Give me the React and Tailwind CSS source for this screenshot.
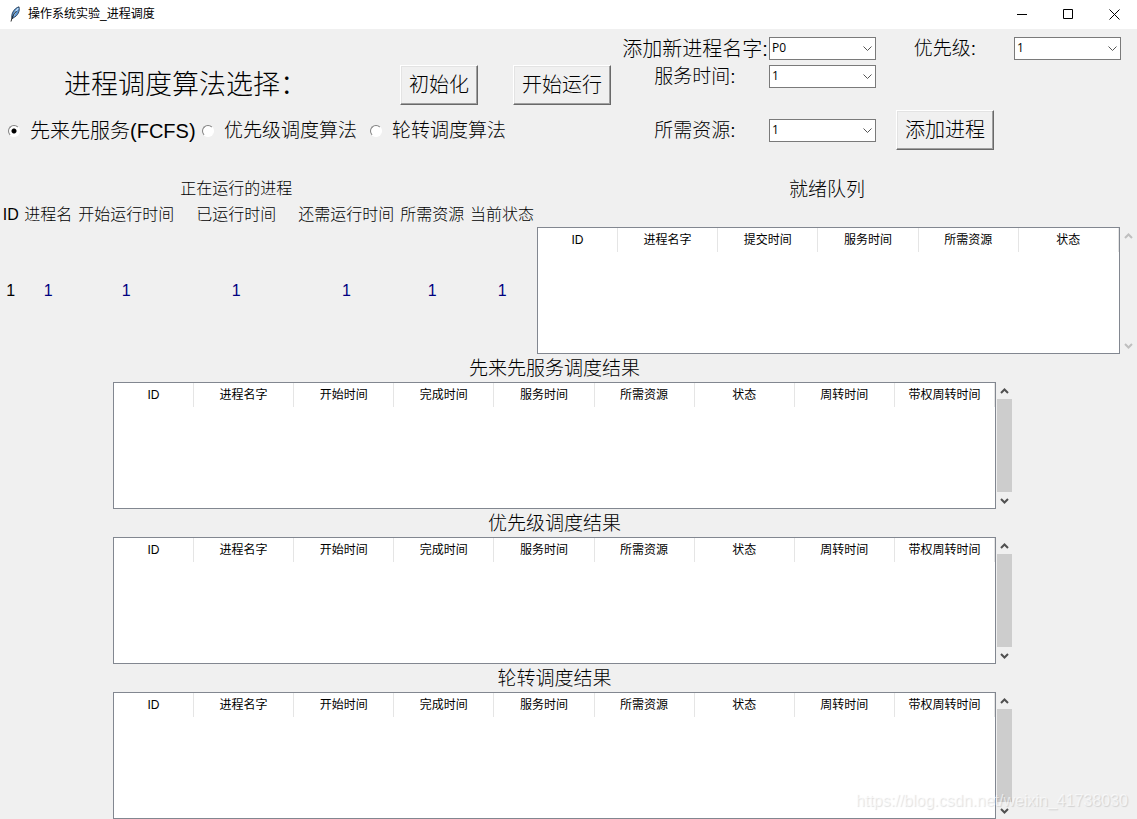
import { useState } from 'react';

const QUEUE_COLUMNS = ['ID', '进程名字', '提交时间', '服务时间', '所需资源', '状态'];

const RESULT_COLUMNS = [
  'ID', '进程名字', '开始时间', '完成时间', '服务时间',
  '所需资源', '状态', '周转时间', '带权周转时间',
];

const RESULTS = ['先来先服务调度结果', '优先级调度结果', '轮转调度结果'];

const RUNNING = [
  { label: 'ID',           value: '1', width: 'w-[4%]' },
  { label: '进程名',       value: '1', width: 'w-[10%]' },
  { label: '开始运行时间', value: '1', width: 'w-[19%]' },
  { label: '已运行时间',   value: '1', width: 'w-[22%]' },
  { label: '还需运行时间', value: '1', width: 'w-[19%]' },
  { label: '所需资源',     value: '1', width: 'w-[13%]' },
  { label: '当前状态',     value: '1', width: 'w-[13%]' },
];

const ALGORITHMS = [
  { id: 'fcfs',     label: '先来先服务(FCFS)', size: 'text-[20px]' },
  { id: 'priority', label: '优先级调度算法',   size: 'text-[19px]' },
  { id: 'rr',       label: '轮转调度算法',     size: 'text-[19px]' },
];

function Feather() {
  return (
    <svg width="16" height="16" viewBox="0 0 16 16" aria-hidden="true">
      <path d="M5.200 13C3.500 9.200 6.400 2.400 12 .8c1.100 4.200-.9 9-6 11.200z" fill="#5a93cf" stroke="#1c2f45" strokeWidth=".8" />
      <path d="M7 9.500C7.600 6.500 9.400 3.800 11.300 2.200" stroke="#c4e0f7" strokeWidth="1.400" fill="none" />
      <path d="M4 15.500C4.800 11.800 6.600 8 9.500 5" stroke="#111" strokeWidth=".9" fill="none" />
    </svg>
  );
}

function TitleBar() {
  return (
    <header className="flex h-[29px] items-center justify-between bg-white pl-[7px]">
      <div className="flex items-center gap-[5px] pb-[2px] text-[12px] leading-4">
        <Feather />
        <h1>操作系统实验_进程调度</h1>
      </div>
      <div className="flex h-[27px]">
        <button type="button" aria-label="最小化" className="flex w-[46px] items-center justify-center">
          <svg width="11" height="11" viewBox="0 0 11 11" stroke="#000" fill="none"><path d="M0 5.500h10" /></svg>
        </button>
        <button type="button" aria-label="最大化" className="flex w-[46px] items-center justify-center">
          <svg width="11" height="11" viewBox="0 0 11 11" stroke="#000" fill="none"><path d="M.5.5h9v9h-9z" /></svg>
        </button>
        <button type="button" aria-label="关闭" className="flex w-[46px] items-center justify-center">
          <svg width="11" height="11" viewBox="0 0 11 11" stroke="#000" fill="none"><path d="M.5.5l10 10M10.500.5l-10 10" /></svg>
        </button>
      </div>
    </header>
  );
}

function TkButton({ children }) {
  return (
    <button
      type="button"
      className="h-10 shrink-0 whitespace-nowrap border border-t-white border-l-white border-r-[#696969] border-b-[#696969] px-2 text-[20px] leading-6 font-light shadow-[inset_-1px_-1px_0_#a0a0a0,inset_1px_1px_0_#e3e3e3]"
    >
      {children}
    </button>
  );
}

function Combo({ id, options }) {
  return (
    <div className="relative h-[23px] w-[107px]">
      <select
        id={id}
        className="block h-full w-full appearance-none border border-[#7a7a7a] bg-white pl-[2px] font-['Open_Sans','Noto_Sans_CJK_SC',sans-serif] text-[12px] leading-5 font-normal"
      >
        {options.map((o) => <option key={o}>{o}</option>)}
      </select>
      <svg className="pointer-events-none absolute top-2 right-1" width="9" height="7" viewBox="0 0 9 7" fill="none" stroke="#555">
        <path d="M.5 1.500l4 4 4-4" />
      </svg>
    </div>
  );
}

function Arrow({ up, muted }) {
  return (
    <svg width="9" height="6" viewBox="0 0 9 6" fill="none" stroke={muted ? '#bfbfbf' : '#505050'} strokeWidth="2">
      <path d={up ? 'M1 5l3.500-3.500L8 5' : 'M1 1l3.500 3.500L8 1'} />
    </svg>
  );
}

function ScrollBar({ disabled }) {
  return (
    <div className="flex w-[17px] shrink-0 flex-col px-px">
      <button type="button" aria-label="向上滚动" disabled={disabled} className="flex h-[17px] items-center justify-center">
        <Arrow up muted={disabled} />
      </button>
      <div className={disabled ? 'flex-1' : 'flex-1 bg-[#cdcdcd]'} />
      <button type="button" aria-label="向下滚动" disabled={disabled} className="flex h-[17px] items-center justify-center">
        <Arrow muted={disabled} />
      </button>
    </div>
  );
}

function TreeView({ columns, label, disabled }) {
  return (
    <div className="flex h-[127px]">
      <div className="min-w-0 flex-1 border border-[#828790] bg-white">
        <table aria-label={label} className="w-full table-fixed border-separate border-spacing-0 text-[12px] leading-4">
          <thead>
            <tr>
              {columns.map((c) => (
                <th key={c} scope="col" className="h-6 border-r border-[#e5e5e5] p-0 font-normal first:w-20">
                  {c}
                </th>
              ))}
            </tr>
          </thead>
          <tbody />
        </table>
      </div>
      <ScrollBar disabled={disabled} />
    </div>
  );
}

function AlgorithmPicker() {
  const [algorithm, setAlgorithm] = useState('fcfs');

  return (
    <fieldset className="grid grid-cols-[194px_168px_auto] pl-2">
      {ALGORITHMS.map((a) => (
        <label key={a.id} className="flex h-7 items-center gap-[10px] whitespace-nowrap leading-[30px] font-light">
          <input
            type="radio"
            name="algorithm"
            checked={algorithm === a.id}
            onChange={() => setAlgorithm(a.id)}
            className="size-3 shrink-0 appearance-none rounded-full border border-t-[#808080] border-l-[#808080] border-r-white border-b-white bg-white checked:bg-[radial-gradient(circle,#000_2px,#fff_3px)]"
          />
          <span className={a.size}>{a.label}</span>
        </label>
      ))}
    </fieldset>
  );
}

function AddProcessForm() {
  return (
    <form className="grid grid-cols-[148px_107px_138px_107px] content-start justify-end pt-[5px] pr-4 text-[19px] leading-[30px] font-light">
      <label htmlFor="name" className="h-7 text-center text-[20px] whitespace-nowrap">添加新进程名字:</label>
      <div className="flex items-center"><Combo id="name" options={['P0', 'P1', 'P2']} /></div>
      <label htmlFor="priority" className="h-7 text-center">优先级:</label>
      <div className="flex items-center"><Combo id="priority" options={['1', '2', '3']} /></div>

      <label htmlFor="service" className="h-7 text-center">服务时间:</label>
      <div className="col-span-3 flex items-center"><Combo id="service" options={['1', '2', '3']} /></div>

      <label htmlFor="resource" className="mt-5 h-7 self-center text-center">所需资源:</label>
      <div className="mt-5 flex items-center"><Combo id="resource" options={['1', '2', '3']} /></div>
      <div className="mt-5 flex justify-center"><TkButton>添加进程</TkButton></div>
    </form>
  );
}

function RunningProcess() {
  return (
    <table className="w-full table-fixed border-collapse text-[16px] leading-6 whitespace-nowrap">
      <colgroup>
        {RUNNING.map((c) => <col key={c.label} className={c.width} />)}
      </colgroup>
      <thead>
        <tr className="h-[27px]">
          <td colSpan={3} />
          <th className="p-0 font-light">正在运行的进程</th>
          <td colSpan={3} />
        </tr>
        <tr className="h-[25px]">
          {RUNNING.map((c) => (
            <th key={c.label} scope="col" className="p-0 font-light">{c.label}</th>
          ))}
        </tr>
      </thead>
      <tbody>
        <tr className="h-[127px] text-center text-[#000080]">
          {RUNNING.map((c) => (
            <td key={c.label} className="p-0 first:text-black">{c.value}</td>
          ))}
        </tr>
      </tbody>
    </table>
  );
}

export default function App() {
  return (
    <div className="relative min-h-screen bg-[#f0f0f0] font-['Liberation_Sans','Noto_Sans_CJK_SC',sans-serif] text-black">
      <TitleBar />

      <main>
        {/* Controls */}
        <div className="grid h-[146px] grid-cols-[537fr_600fr]">
          <div className="pt-9">
            <div className="flex items-center gap-[35px] pl-16">
              <h2 className="w-[301px] text-[27px] leading-10 font-light whitespace-nowrap">进程调度算法选择：</h2>
              <TkButton>初始化</TkButton>
              <TkButton>开始运行</TkButton>
            </div>
            <div className="pt-3">
              <AlgorithmPicker />
            </div>
          </div>
          <AddProcessForm />
        </div>

        {/* Running process and ready queue */}
        <div className="grid grid-cols-[537fr_600fr]">
          <RunningProcess />
          <section>
            <h2 className="mb-6 h-7 pr-5 text-center text-[19px] leading-[30px] font-light">就绪队列</h2>
            <TreeView columns={QUEUE_COLUMNS} label="就绪队列" disabled />
          </section>
        </div>

        {/* Results of each algorithm */}
        <div className="pr-[124px] pl-[113px]">
          {RESULTS.map((title) => (
            <section key={title}>
              <h2 className="h-7 pr-[17px] text-center text-[19px] leading-[30px] font-light">{title}</h2>
              <TreeView columns={RESULT_COLUMNS} label={title} />
            </section>
          ))}
        </div>
      </main>

      <p className="pointer-events-none absolute right-[9px] bottom-2 text-[16px] leading-5 text-white/60 [text-shadow:1px_1px_1px_#00000020]">
        https://blog.csdn.net/weixin_41738030
      </p>
    </div>
  );
}
